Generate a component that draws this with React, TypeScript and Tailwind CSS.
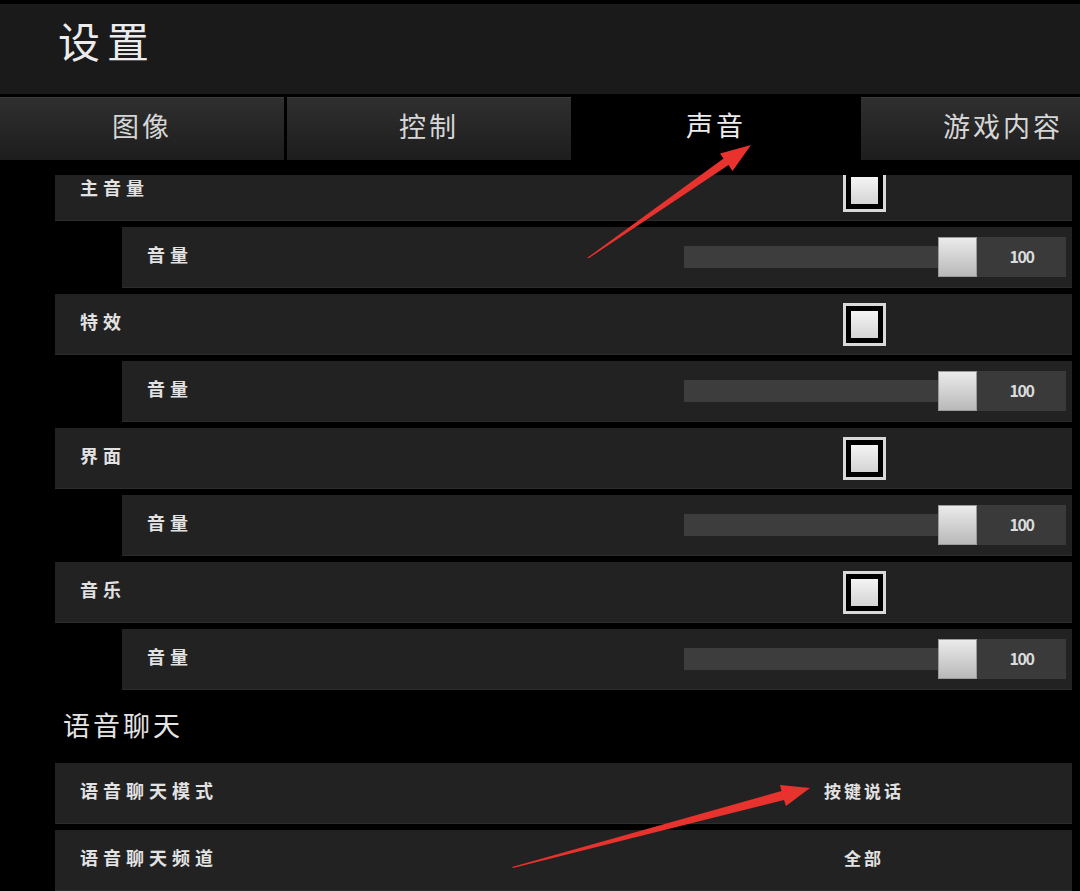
import React from "react";

type RowProps = {
  label: string;
  sub?: boolean;
  children?: React.ReactNode;
};

function Row({ label, sub, children }: RowProps) {
  return (
    <div
      className={
        sub
          ? "ml-[67px] flex items-center h-[61px] shrink-0 bg-[#222222] border-b border-[#2c2c2c]"
          : "flex items-center h-[61px] shrink-0 bg-[#222222] border-b border-[#2c2c2c]"
      }
    >
      <div className="flex-1 pl-[25px] pb-[5px] text-[18px] font-bold tracking-[5px] text-[#e2e2e2]">{label}</div>
      <div className="w-[388px] shrink-0 pr-[6px] flex items-center">{children}</div>
    </div>
  );
}

function Checkbox() {
  return (
    <div className="w-[360px] flex justify-center">
      <div className="w-[43px] h-[43px] border-[3px] border-[#d9d9d9] bg-black flex items-center justify-center">
        <div className="w-[27px] h-[27px] bg-linear-to-b from-[#f4f4f4] to-[#d4d4d4]" />
      </div>
    </div>
  );
}

function Slider({ value }: { value: number }) {
  return (
    <div className="flex items-center">
      <div className="w-[254px] h-[22px] bg-[#3d3d3d]" />
      <div className="w-[39px] h-[40px] bg-linear-to-b from-[#ebebeb] to-[#b9b9b9] border border-[#9a9a9a]" />
      <div className="w-[89px] h-[40px] bg-[#3a3a3a] flex items-center justify-center pb-[2px] text-[16px] font-bold tracking-[-1.5px] text-[#dcdcdc]">
        {value}
      </div>
    </div>
  );
}

function Value({ text }: { text: string }) {
  return (
    <div className="w-[360px] flex justify-center pb-[5px] text-[17px] font-bold tracking-[3px] text-[#e2e2e2]">{text}</div>
  );
}

const tabs = ["图像", "控制", "声音", "游戏内容"];

export default function App() {
  return (
    <div className="relative w-[1080px] h-[891px] overflow-hidden bg-black font-['Noto_Sans_CJK_SC','Noto_Sans',sans-serif]">
      <div className="pt-[4px]">
        <div className="h-[90px] bg-[#1a1a1a] pl-[58px] pb-[20px] flex items-center text-[42px] tracking-[7px] text-[#ececec]">
          设置
        </div>
      </div>

      <div className="mt-[3px] flex gap-[3px] h-[63px]">
        {tabs.map((t, i) =>
          i === 2 ? (
            <div key={t} className="w-[284px] shrink-0 bg-black flex items-center justify-center pb-[6px] text-[27px] tracking-[3px] text-[#ececec]">
              {t}
            </div>
          ) : (
            <div
              key={t}
              className="w-[284px] shrink-0 bg-linear-to-b from-[#2f2f2f] to-[#1d1d1d] border-t border-[#3b3b3b] flex items-center justify-center pb-[6px] text-[27px] tracking-[3px] text-[#d6d6d6]"
            >
              {t}
            </div>
          )
        )}
      </div>

      <div className="mt-[15px] h-[716px] overflow-hidden pl-[55px] pr-[8px]">
        <div className="-mt-[15px] flex flex-col gap-[6px]">
          <Row label="主音量">
            <Checkbox />
          </Row>
          <Row label="音量" sub>
            <Slider value={100} />
          </Row>
          <Row label="特效">
            <Checkbox />
          </Row>
          <Row label="音量" sub>
            <Slider value={100} />
          </Row>
          <Row label="界面">
            <Checkbox />
          </Row>
          <Row label="音量" sub>
            <Slider value={100} />
          </Row>
          <Row label="音乐">
            <Checkbox />
          </Row>
          <Row label="音量" sub>
            <Slider value={100} />
          </Row>
          <div className="h-[61px] shrink-0 flex items-center pl-[8px] pb-[2px] text-[27px] tracking-[3px] text-[#e4e4e4]">
            语音聊天
          </div>
          <Row label="语音聊天模式">
            <Value text="按键说话" />
          </Row>
          <Row label="语音聊天频道">
            <Value text="全部" />
          </Row>
        </div>
      </div>

      {/* red annotation arrows */}
      <svg className="absolute inset-0 pointer-events-none" width="1080" height="891" viewBox="0 0 1080 891">
        <polygon
          fill="#e8322e"
          points="587,258 589,258 728.5,165 732.5,171 751,145 720,153.5 723.5,158.5"
        />
        <polygon
          fill="#e8322e"
          points="512,867 513,868 784,800 786,806 810,788 780,785 781.5,791"
        />
      </svg>
    </div>
  );
}
